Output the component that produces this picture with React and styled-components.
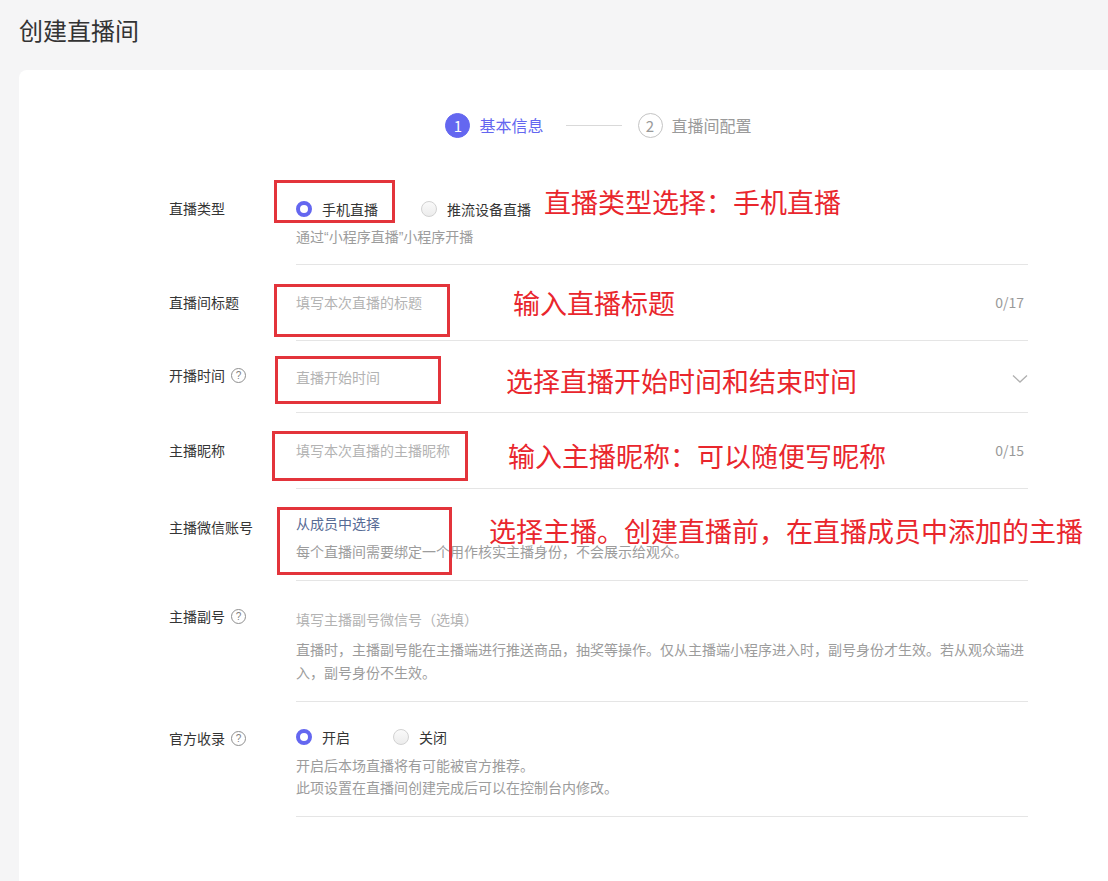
import React from 'react';
import styled, { createGlobalStyle } from 'styled-components';

const GlobalStyle = createGlobalStyle`
  * { box-sizing: border-box; }
  html, body {
    margin: 0;
    padding: 0;
    background: #f5f5f6;
    overflow: hidden;
  }
  body {
    font-family: "Noto Sans CJK SC", "Noto Sans", "Liberation Sans", sans-serif;
    color: #353535;
  }
`

const ScPage = styled.div`
  min-height: 100vh;
  padding-left: 19px;
`

const ScTitle = styled.h1`
  height: 70px;
  margin: 0;
  padding-top: 16px;
  font-size: 24px;
  line-height: 28px;
  font-weight: 400;
  color: #333;
`

const ScCard = styled.div`
  position: relative;
  min-height: calc(100vh - 70px);
  background: #fff;
  border-top-left-radius: 8px;
  padding-top: 43px;
`

const ScForm = styled.div`
  margin-left: 150px;
  width: 859px;
`

const ScSteps = styled.div`
  display: flex;
  justify-content: center;
  align-items: center;
  height: 24px;
  margin-bottom: 27px;
`

const ScStep = styled.div`
  display: flex;
  align-items: center;
  gap: 9px;
  font-size: 16px;
  color: ${p => (p.$active ? '#6467f0' : '#9a9a9a')};
`

const ScStepNum = styled.span`
  width: 25px;
  height: 25px;
  border-radius: 50%;
  display: inline-flex;
  align-items: center;
  justify-content: center;
  font-size: 15px;
  background: ${p => (p.$active ? '#6467f0' : '#fff')};
  color: ${p => (p.$active ? '#fff' : '#9a9a9a')};
  border: 1px solid ${p => (p.$active ? '#6467f0' : '#c4c4c4')};
`

const ScStepLine = styled.span`
  width: 56px;
  height: 1px;
  background: #d9d9d9;
  margin: 0 16px 0 22px;
`

const ScRow = styled.div`
  display: grid;
  grid-template-columns: 127px 732px;
`

const ScLabel = styled.div`
  display: flex;
  align-items: center;
  gap: 6px;
  height: 22px;
  margin-top: ${p => p.$pt}px;
  font-size: 14px;
  line-height: 22px;
  color: #353535;
`

const ScHelp = styled.span`
  width: 15px;
  height: 15px;
  border-radius: 50%;
  border: 1px solid #8f8f8f;
  color: #7f7f7f;
  font-family: "Liberation Sans", sans-serif;
  font-size: 10px;
  line-height: 13px;
  text-align: center;
`

const ScField = styled.div`
  padding-top: ${p => p.$pt}px;
  padding-bottom: ${p => p.$pb}px;
  border-bottom: 1px solid #e5e5e5;
`

const ScLine = styled.div`
  display: flex;
  align-items: center;
  justify-content: space-between;
  height: 22px;
  font-size: 14px;
  line-height: 22px;
  color: ${p => p.$color || '#b3b3b3'};
`

const ScCounter = styled.span`
  color: #999;
  padding-right: 4px;
`

const ScHint = styled.div`
  margin-top: ${p => p.$mt}px;
  font-size: 14px;
  line-height: ${p => p.$lh || 22}px;
  color: #9c9c9c;
`

const ScQuote = styled.span`
  font-family: "Liberation Sans", sans-serif;
  line-height: 1;
`

const ScRadioGroup = styled.div`
  display: flex;
  align-items: center;
  gap: 43px;
  height: 22px;
`

const ScRadio = styled.label`
  display: flex;
  align-items: center;
  gap: 10px;
  font-size: 14px;
  line-height: 22px;
  color: #353535;
`

const ScDot = styled.span`
  width: 16px;
  height: 16px;
  border-radius: 50%;
  background: ${p => (p.$on ? '#fff' : 'linear-gradient(#fafafa, #ececec)')};
  border: ${p => (p.$on ? '4.5px solid #6467f0' : '1px solid #d2d2d2')};
`

const ScChevron = styled.svg`
  width: 16px;
  height: 10px;
  margin-top: 4px;
`

const ScBox = styled.div`
  position: absolute;
  left: ${p => p.$x}px;
  top: ${p => p.$y}px;
  width: ${p => p.$w}px;
  height: ${p => p.$h}px;
  border: 3px solid #e3343b;
`

const ScNote = styled.div`
  position: absolute;
  left: ${p => p.$x}px;
  top: ${p => p.$y}px;
  transform: translateY(-50%);
  font-size: 27px;
  line-height: 34px;
  color: #e9262d;
  white-space: nowrap;
`

const Radio = ({ on, children }) => (
  <ScRadio>
    <ScDot $on={on} />
    {children}
  </ScRadio>
)

const App = () => {
  return (
    <ScPage>
      <GlobalStyle />
      <ScTitle>创建直播间</ScTitle>
      <ScCard>
        <ScForm>
          <ScSteps>
            <ScStep $active>
              <ScStepNum $active>1</ScStepNum>
              基本信息
            </ScStep>
            <ScStepLine />
            <ScStep>
              <ScStepNum>2</ScStepNum>
              直播间配置
            </ScStep>
          </ScSteps>

          <ScRow>
            <ScLabel $pt={33}>直播类型</ScLabel>
            <ScField $pt={34} $pb={17}>
              <ScRadioGroup>
                <Radio on>手机直播</Radio>
                <Radio>推流设备直播</Radio>
              </ScRadioGroup>
              <ScHint $mt={5}>
                通过<ScQuote>“</ScQuote>小程序直播<ScQuote>”</ScQuote>小程序开播
              </ScHint>
            </ScField>
          </ScRow>

          <ScRow>
            <ScLabel $pt={26}>直播间标题</ScLabel>
            <ScField $pt={26} $pb={27}>
              <ScLine>
                填写本次直播的标题
                <ScCounter>0/17</ScCounter>
              </ScLine>
            </ScField>
          </ScRow>

          <ScRow>
            <ScLabel $pt={23}>
              开播时间
              <ScHelp>?</ScHelp>
            </ScLabel>
            <ScField $pt={25} $pb={24}>
              <ScLine>
                直播开始时间
                <ScChevron viewBox="0 0 16 10">
                  <polyline points="1,1.5 8,8 15,1.5" fill="none" stroke="#b0b0b0" strokeWidth="1.3" />
                </ScChevron>
              </ScLine>
            </ScField>
          </ScRow>

          <ScRow>
            <ScLabel $pt={26}>主播昵称</ScLabel>
            <ScField $pt={26} $pb={27}>
              <ScLine>
                填写本次直播的主播昵称
                <ScCounter>0/15</ScCounter>
              </ScLine>
            </ScField>
          </ScRow>

          <ScRow>
            <ScLabel $pt={27}>主播微信账号</ScLabel>
            <ScField $pt={23} $pb={18}>
              <ScLine $color="#576b95">从成员中选择</ScLine>
              <ScHint $mt={6}>每个直播间需要绑定一个用作核实主播身份，不会展示给观众。</ScHint>
            </ScField>
          </ScRow>

          <ScRow>
            <ScLabel $pt={24}>
              主播副号
              <ScHelp>?</ScHelp>
            </ScLabel>
            <ScField $pt={27} $pb={17}>
              <ScLine>填写主播副号微信号（选填）</ScLine>
              <ScHint $mt={8} $lh={23}>
                直播时，主播副号能在主播端进行推送商品，抽奖等操作。仅从主播端小程序进入时，副号身份才生效。若从观众端进入，副号身份不生效。
              </ScHint>
            </ScField>
          </ScRow>

          <ScRow>
            <ScLabel $pt={25}>
              官方收录
              <ScHelp>?</ScHelp>
            </ScLabel>
            <ScField $pt={24} $pb={18}>
              <ScRadioGroup>
                <Radio on>开启</Radio>
                <Radio>关闭</Radio>
              </ScRadioGroup>
              <ScHint $mt={6}>
                开启后本场直播将有可能被官方推荐。
                <br />
                此项设置在直播间创建完成后可以在控制台内修改。
              </ScHint>
            </ScField>
          </ScRow>
        </ScForm>

        <ScBox $x={255} $y={110} $w={121} $h={43} />
        <ScBox $x={255} $y={214} $w={176} $h={53} />
        <ScBox $x={256} $y={286} $w={166} $h={48} />
        <ScBox $x={253} $y={361} $w={196} $h={50} />
        <ScBox $x={258} $y={437} $w={175} $h={68} />

        <ScNote $x={525} $y={132}>直播类型选择：手机直播</ScNote>
        <ScNote $x={494} $y={233}>输入直播标题</ScNote>
        <ScNote $x={487} $y={311}>选择直播开始时间和结束时间</ScNote>
        <ScNote $x={489} $y={386}>输入主播昵称：可以随便写昵称</ScNote>
        <ScNote $x={470} $y={461}>选择主播。创建直播前，在直播成员中添加的主播</ScNote>
      </ScCard>
    </ScPage>
  )
}

export default App;
